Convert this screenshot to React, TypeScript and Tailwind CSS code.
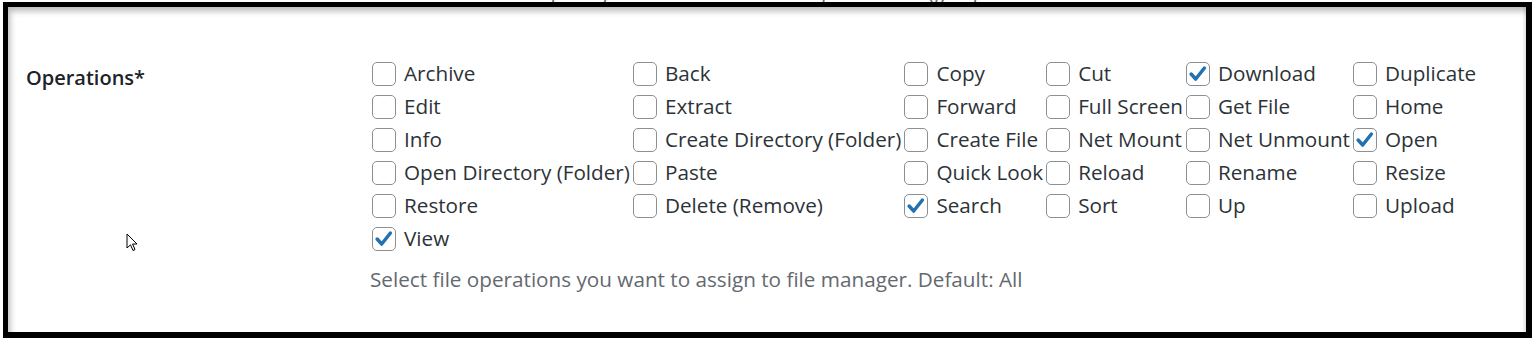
const OPS: { label: string; checked?: boolean }[] = [
  { label: "Archive" },
  { label: "Back" },
  { label: "Copy" },
  { label: "Cut" },
  { label: "Download", checked: true },
  { label: "Duplicate" },
  { label: "Edit" },
  { label: "Extract" },
  { label: "Forward" },
  { label: "Full Screen" },
  { label: "Get File" },
  { label: "Home" },
  { label: "Info" },
  { label: "Create Directory (Folder)" },
  { label: "Create File" },
  { label: "Net Mount" },
  { label: "Net Unmount" },
  { label: "Open", checked: true },
  { label: "Open Directory (Folder)" },
  { label: "Paste" },
  { label: "Quick Look" },
  { label: "Reload" },
  { label: "Rename" },
  { label: "Resize" },
  { label: "Restore" },
  { label: "Delete (Remove)" },
  { label: "Search", checked: true },
  { label: "Sort" },
  { label: "Up" },
  { label: "Upload" },
  { label: "View", checked: true },
];

function Box({ checked }: { checked?: boolean }) {
  return (
    <span className="flex h-[24px] w-[24px] shrink-0 items-center justify-center rounded-[5px] border border-[#8c8f94] bg-white">
      {checked && (
        <svg viewBox="0 0 24 24" className="h-[22px] w-[22px]">
          <path
            d="M4.5 12 L9.5 17.5 L19 5.5"
            fill="none"
            stroke="#2271b1"
            strokeWidth="3.8"
            strokeLinecap="round"
            strokeLinejoin="round"
          />
        </svg>
      )}
    </span>
  );
}

export default function App() {
  return (
    <div
      className="flex h-[338px] w-[1532px] flex-col overflow-hidden bg-white text-[#2c3338]"
      style={{ fontFamily: '"Open Sans", "Noto Sans", sans-serif' }}
    >
      {/* clipped description from the field above */}
      <div className="h-[2px] shrink-0 overflow-hidden">
        <p className="-mt-[17px] pl-[370px] text-[20.7px] leading-[18px] text-[#646970]">
          Enter folder or file path you want to hide. Multiple comma(,) separated.
        </p>
      </div>

      <div className="ml-[3px] flex-1 border-t-[5px] border-r-[6px] border-b-[6px] border-l-[5px] border-black">
        <div className="relative h-full bg-white shadow-[inset_4px_6px_6px_-2px_rgba(0,0,0,0.28),inset_-5px_0_3px_-3px_rgba(0,0,0,0.12)]">
          <div className="flex pt-[50px]">
            <div className="w-[364px] shrink-0 pl-[18px] pt-[4px] text-[20px] font-semibold leading-[33px] text-[#1d2327]">
              Operations*
            </div>
            <div>
              <div className="grid grid-cols-[repeat(6,max-content)] gap-x-[3px]">
                {OPS.map((op) => (
                  <label
                    key={op.label}
                    className="flex h-[33px] items-center gap-[8px] text-[20.7px] leading-none"
                  >
                    <Box checked={op.checked} />
                    <span>{op.label}</span>
                  </label>
                ))}
              </div>
              <p className="ml-[-2px] mt-[12px] text-[20.7px] leading-[24px] text-[#646970]">
                Select file operations you want to assign to file manager. Default: All
              </p>
            </div>
          </div>

          {/* mouse pointer */}
          <svg
            viewBox="0 0 12 19"
            className="absolute left-[118px] top-[226px] h-[19px] w-[12px]"
          >
            <path
              d="M1 1 L1 15 L4.5 11.8 L7 17.5 L9 16.6 L6.6 11 L11 11 Z"
              fill="#fff"
              stroke="#000"
              strokeWidth="1"
              strokeLinejoin="round"
            />
          </svg>
        </div>
      </div>
    </div>
  );
}
